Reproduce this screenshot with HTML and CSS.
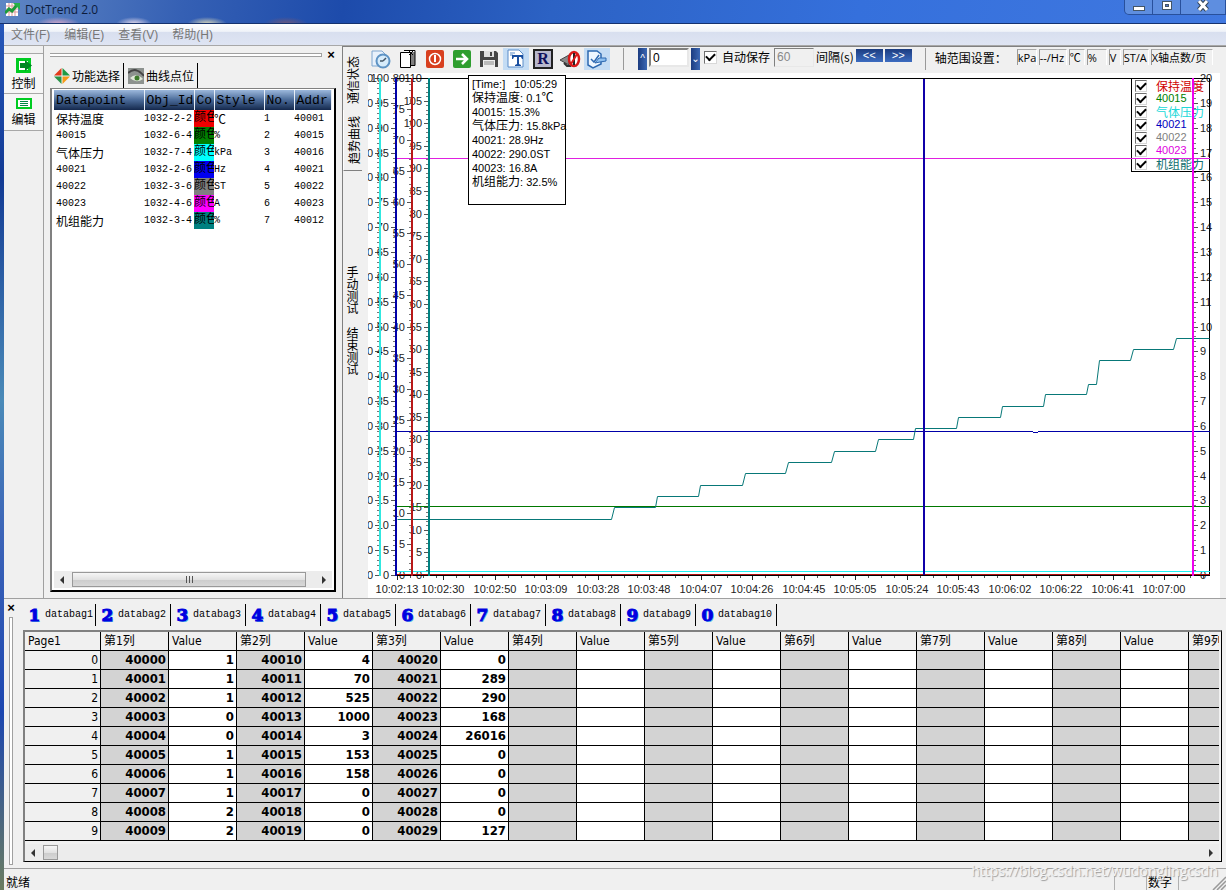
FILE: index.html
```html
<!DOCTYPE html>
<html lang="zh-CN">
<head>
<meta charset="utf-8">
<title>DotTrend 2.0</title>
<link rel="stylesheet" href="styles.css">
</head>
<body>
<header class="titlebar">
  <svg class="app-icon" width="15" height="15" viewBox="0 0 15 15"><rect x="1" y="1" width="12" height="13" fill="#fff"/><path d="M1 4h12M1 7h12M1 10h12M4 1v13M7 1v13M10 1v13" stroke="#d99" fill="none"/><path d="M0 11l4-4 3 2 5-6" stroke="#1c9b3a" stroke-width="3" fill="none"/><path d="M8 1h7v7z" fill="#28b048"/></svg>
  <h1 class="title">DotTrend 2.0</h1>
  <div class="win-buttons">
    <button aria-label="最小化"><svg width="14" height="14"><rect x="1.500" y="6.500" width="11" height="4" fill="#fff" stroke="#456"/></svg></button>
    <button aria-label="最大化"><svg width="14" height="14"><rect x="2.500" y="1.500" width="9" height="8" fill="#fff" stroke="#456"/><rect x="5.500" y="4.500" width="3" height="2" fill="#57c" stroke="#456"/></svg></button>
    <button aria-label="关闭"><svg width="14" height="14"><path d="M3 1l8 9M11 1l-8 9" stroke="#345" stroke-width="5"/><path d="M3 1l8 9M11 1l-8 9" stroke="#fff" stroke-width="3"/></svg></button>
  </div>
</header>

<div class="window">
  <nav class="menu">
    <a href="#">文件(F)</a><a href="#">编辑(E)</a><a href="#">查看(V)</a><a href="#">帮助(H)</a>
  </nav>

  <main class="main">
    <aside class="side">
      <button class="side-btn"><svg width="18" height="18" viewBox="0 0 18 18"><rect x="2.500" y="2.500" width="12" height="12" fill="#fff" stroke="#0c2" stroke-width="3"/><path d="M5 6h5V3l7 5.500-7 5.500v-3H5z" fill="#082"/></svg>控制</button>
      <button class="side-btn"><svg width="18" height="14" viewBox="0 0 18 14"><rect x="2" y="2" width="14" height="9" fill="#fff" stroke="#0c2" stroke-width="2"/><path d="M5 4.500h8M5 6.500h8M5 8.500h8" stroke="#084"/></svg>编辑</button>
    </aside>

    <section class="panel">
      <div class="grip-row"><span class="grip"></span><button class="close" aria-label="关闭面板">×</button></div>
      <div class="ptabs">
        <button class="ptab"><svg width="16" height="16" viewBox="0 0 16 16"><path d="M7.500 0v7.500H0z" fill="#e33c1c"/><path d="M8.500 0v7.500H16z" fill="#1f9a44"/><path d="M0 8.500h7.500V16z" fill="#2a9348"/><path d="M16 8.500H8.500V16z" fill="#f49a1a"/></svg>功能选择</button>
        <button class="ptab"><svg width="16" height="16" viewBox="0 0 16 16"><rect width="16" height="16" fill="#8d928f"/><path d="M0 5q8-7 16 3" stroke="#444" stroke-width="2" fill="none"/><path d="M2 10q6-6 13 1-7 5-13-1" fill="#dfe8d8"/><circle cx="9" cy="10" r="2.500" fill="#3d7a2c"/></svg>曲线点位</button>
      </div>
      <div class="list">
        <table class="points">
          <colgroup><col class="c90"><col class="c50"><col class="c20"><col class="c50"><col class="c30"><col></colgroup>
          <thead><tr><th>Datapoint</th><th>Obj_Id</th><th>Co</th><th>Style</th><th>No.</th><th>Addr</th></tr></thead>
          <tbody>
            <tr><td class="cjk">保持温度</td><td>1032-2-2</td><td class="sw red">颜色</td><td class="cjk">℃</td><td>1</td><td>40001</td></tr>
            <tr><td>40015</td><td>1032-6-4</td><td class="sw green">颜色</td><td>%</td><td>2</td><td>40015</td></tr>
            <tr><td class="cjk">气体压力</td><td>1032-7-4</td><td class="sw cyan">颜色</td><td>kPa</td><td>3</td><td>40016</td></tr>
            <tr><td>40021</td><td>1032-2-6</td><td class="sw blue">颜色</td><td>Hz</td><td>4</td><td>40021</td></tr>
            <tr><td>40022</td><td>1032-3-6</td><td class="sw gray">颜色</td><td>ST</td><td>5</td><td>40022</td></tr>
            <tr><td>40023</td><td>1032-4-6</td><td class="sw magenta">颜色</td><td>A</td><td>6</td><td>40023</td></tr>
            <tr><td class="cjk">机组能力</td><td>1032-3-4</td><td class="sw teal">颜色</td><td>%</td><td>7</td><td>40012</td></tr>
          </tbody>
        </table>
        <div class="scroll"><span class="arrow left"></span><span class="thumb wide"><i></i><i></i><i></i></span><span class="arrow right"></span></div>
      </div>
    </section>

    <section class="trend">
      <nav class="vtabs">
        <button class="vtab turned">通信状态</button>
        <button class="vtab turned active">趋势曲线</button>
        <button class="vtab low">手动测试</button>
        <button class="vtab">结束测试</button>
      </nav>
      <div class="trend-body">
        <div class="toolbar">
          <div class="tools">
            <button aria-label="历史"><svg width="20" height="20" viewBox="0 0 20 20"><path d="M1 2h10l3 3v12H1z" fill="#e8f1fb" stroke="#7fa6cf"/><circle cx="12" cy="12" r="6.500" fill="#d7ecfb" stroke="#5e93c4" stroke-width="2"/><path d="M12 12l3-3M12 12H9" stroke="#456" stroke-width="1.500"/></svg></button>
            <button aria-label="复制"><svg width="20" height="20" viewBox="0 0 20 20"><path d="M6 1.500h11v15H6" fill="#fff" stroke="#000"/><path d="M2.500 3.500h10v15h-10z" fill="#fff" stroke="#000"/><path d="M14 3v14M16 3v13" stroke="#000"/><path d="M11 2l4 4M15 2l-4 4" stroke="#000"/></svg></button>
            <button aria-label="停止"><svg width="20" height="20" viewBox="0 0 20 20"><rect x="1" y="1" width="18" height="18" rx="2" fill="#d8401f"/><circle cx="10" cy="10" r="5.500" fill="none" stroke="#fff" stroke-width="1.500"/><path d="M10 6v7" stroke="#fff" stroke-width="2"/></svg></button>
            <button aria-label="开始"><svg width="20" height="20" viewBox="0 0 20 20"><rect x="1" y="1" width="18" height="18" rx="2" fill="#2f9e2f"/><path d="M4 10h11M10 5l5 5-5 5" stroke="#fff" stroke-width="2.500" fill="none"/></svg></button>
            <button aria-label="保存"><svg width="20" height="20" viewBox="0 0 20 20"><path d="M1 2h16l2 2v14H1z" fill="#444"/><rect x="5" y="2" width="10" height="6" fill="#ddd"/><rect x="11" y="3" width="2" height="4" fill="#444"/><rect x="4" y="11" width="12" height="7" fill="#eee"/><path d="M5 13h10M5 15h10" stroke="#888"/></svg></button>
            <button class="on" aria-label="文本"><svg width="20" height="20" viewBox="0 0 20 20"><path d="M2 1h11l4 4v13H2z" fill="#fff" stroke="#5a8cc8"/><path d="M4 4h5M4 6h3" stroke="#5a8cc8"/><path d="M6 6h11v4h-1l-1-2h-2v7l2 1v1H9v-1l2-1V8H8l-1 2H6z" fill="#1a4fa0"/></svg></button>
            <button aria-label="R"><span class="r-icon">R</span></button>
            <button aria-label="静音"><svg width="22" height="20" viewBox="0 0 22 20"><path d="M1 11l9-5v10z" fill="#888" stroke="#444"/><path d="M5 14l3 3h4" stroke="#333" stroke-width="2" fill="none"/><ellipse cx="15" cy="10" rx="5" ry="7" fill="#fff" stroke="#d81818" stroke-width="2.500"/><path d="M15 4v12" stroke="#222" stroke-width="2"/><path d="M12 15l6-10" stroke="#d81818" stroke-width="2"/></svg></button>
            <button class="on" aria-label="编辑曲线"><svg width="22" height="20" viewBox="0 0 22 20"><path d="M2 2h9l4 3v10l-8 4-5-3z" fill="#eef6ff" stroke="#2d68b0" stroke-width="1.500"/><path d="M5 10l3 3 5-7" stroke="#2d68b0" stroke-width="1.500" fill="none"/><path d="M9 14l4-5 7 0v3l-6 1z" fill="#8ec0f0" stroke="#2d68b0"/></svg></button>
          </div>
          <span class="sep"></span>
          <div class="spin"><button aria-label="增加">^</button><input type="text" value="0" aria-label="数值"><button class="down" aria-label="减少">⌄</button></div>
          <label class="auto"><input type="checkbox" class="check" checked>自动保存</label>
          <label class="interval"><input type="text" value="60" disabled>间隔(s)</label>
          <div class="pager"><button>&lt;&lt;</button><button>&gt;&gt;</button></div>
          <span class="sep"></span>
          <span class="range-label">轴范围设置：</span>
          <div class="ranges"><button class="w20">kPa</button><button class="w28">--/Hz</button><button class="w16">℃</button><button class="w20">%</button><button class="w12">V</button><button class="w26">ST/A</button><button class="w62">X轴点数/页</button></div>
        </div>
        <div class="chart">
          <div class="legend">
            <label class="t-red"><input type="checkbox" class="check" checked>保持温度</label>
            <label class="t-green"><input type="checkbox" class="check" checked>40015</label>
            <label class="t-cyan"><input type="checkbox" class="check" checked>气体压力</label>
            <label class="t-blue"><input type="checkbox" class="check" checked>40021</label>
            <label class="t-gray"><input type="checkbox" class="check" checked>40022</label>
            <label class="t-magenta"><input type="checkbox" class="check" checked>40023</label>
            <label class="t-teal"><input type="checkbox" class="check" checked>机组能力</label>
          </div>
          <svg class="plot" id="plot" viewBox="368 73 852 523" preserveAspectRatio="xMinYMin meet"></svg>
          <div class="tip">
            <p><span>[Time:]</span><span class="time">10:05:29</span></p>
            <p><span class="cjk">保持温度</span>: 0.1<span class="cjk">℃</span></p>
            <p>40015: 15.3%</p>
            <p><span class="cjk">气体压力</span>: 15.8kPa</p>
            <p>40021: 28.9Hz</p>
            <p>40022: 290.0ST</p>
            <p>40023: 16.8A</p>
            <p><span class="cjk">机组能力</span>: 32.5%</p>
          </div>
        </div>
      </div>
    </section>
  </main>

  <section class="bags">
    <div class="bag-side"><button class="close" aria-label="关闭数据">×</button><span class="vgrip"></span></div>
    <div class="bag-body">
      <nav class="bag-tabs" id="bag-tabs"></nav>
      <div class="sheet">
        <div class="sheet-view"><table class="grid" id="grid"></table></div>
        <div class="scroll"><span class="arrow left"></span><span class="thumb"></span><span class="arrow right"></span></div>
      </div>
    </div>
  </section>

  <footer class="status">
    <span class="ready">就绪</span><span class="cell"></span><span class="cell num">数字</span><span class="cell last"></span>
    <svg class="size-grip" width="14" height="14"><path d="M1 14L14 1M5 14l9-9M9 14l5-5" stroke="#999" stroke-width="1.500"/></svg>
  </footer>
  <div class="watermark">https://blog.csdn.net/wudonglingcsdn</div>
</div>
<script src="script.js"></script>
</body>
</html>
```
FILE: styles.css
```css
* { box-sizing: border-box; }
body, h1, p { margin: 0; }
body {
  height: 100vh; overflow: hidden; display: flex; flex-direction: column;
  background: linear-gradient(#2a5cc0, #123a94 20%, #4a8ab8 45%, #3c64b8 60%, #1c46b0 80%, #6a7c60);
  font: 12px/16px "Liberation Sans", "Noto Sans CJK SC", sans-serif; color: #000;
}
button { font: inherit; color: inherit; border: 0; padding: 0; background: none; }
a { color: inherit; text-decoration: none; }

.titlebar {
  flex: none; height: 24px; display: flex; align-items: flex-start; gap: 5px; padding-left: 5px;
  border-bottom: 1px solid #16326e;
  background:
    radial-gradient(ellipse 22px 7px at 58px 24px, #d8a8c8, transparent),
    radial-gradient(ellipse 18px 7px at 134px 24px, #e8dcec, transparent),
    radial-gradient(ellipse 20px 7px at 207px 24px, #dcd8b8, transparent),
    radial-gradient(ellipse 22px 7px at 286px 24px, #705878, transparent),
    linear-gradient(100deg, #5f86c4, #3560b4 15%, #1d4bab 28%, #2c62c4 45%, #3570dc 70%, #4078e0);
}
.app-icon { margin-top: 2px; }
.title { flex: 1; font: 12px/19px "Open Sans", sans-serif; color: #0c1c3c; }
.win-buttons { display: flex; border: 1px solid #28509c; border-top: 0; border-radius: 0 0 0 5px; background: #5e8ee0; }
.win-buttons button { width: 28px; height: 14px; display: flex; justify-content: center; border-right: 1px solid #28509c; }
.win-buttons button:last-child { width: 44px; border: 0; }

.window { flex: 1; min-height: 0; margin-left: 4px; display: flex; flex-direction: column; position: relative; background: #f0f0f0; }
.menu {
  flex: none; height: 22px; display: flex; gap: 14px; padding: 2px 7px 0; color: #777; line-height: 18px;
  background: linear-gradient(#fff, #f0f3f9 35%, #d8dfef 40%, #dfe5f3); border-bottom: 1px solid #a8a8a8;
}
.main { flex: 1; min-height: 0; display: flex; border-bottom: 1px solid #a0a0a0; }

.side { width: 40px; flex: none; padding-top: 7px; border-right: 1px solid #a0a0a0; }
.side-btn {
  width: 100%; height: 40px; display: flex; flex-direction: column; align-items: center; justify-content: center;
  border-top: 1px solid #a8a8a8; font-family: "Noto Sans CJK SC", sans-serif; line-height: 16px; background: #f6f6f6;
}
.side-btn + .side-btn { height: 38px; border-bottom: 1px solid #a8a8a8; }

.panel { width: 299px; flex: none; padding: 4px 6px 6px 6px; display: flex; flex-direction: column; border-right: 1px solid #808080; }
.grip-row { display: flex; align-items: center; gap: 4px; height: 10px; }
.grip { flex: 1; height: 4px; border: 1px solid #a0a0a0; border-left: 0; background: #fff; }
.close { font: bold 13px/10px "Liberation Sans", sans-serif; width: 10px; height: 10px; }
.ptabs { display: flex; height: 28px; padding-top: 2px; align-items: flex-end; }
.ptab {
  height: 25px; display: flex; align-items: center; gap: 2px; padding: 0 3px 0 4px; border-right: 1px solid #000;
  font-family: "Noto Sans CJK SC", sans-serif;
}
.list {
  flex: 1; min-height: 0; display: flex; flex-direction: column; padding: 1px 2px 2px 2px;
  background: #fff; border: 1px solid #808080; border-left: 2px solid #808080; border-right: 2px solid #000; border-bottom: 2px solid #000;
}
.points { width: 100%; table-layout: fixed; border-collapse: collapse; font: 10px/15px "Liberation Mono", "Noto Sans CJK SC", monospace; }
.points col.c90 { width: 90px; } .points col.c50 { width: 50px; } .points col.c20 { width: 20px; }
.points col.c30 { width: 30px; }
.points th, .points td { padding: 0; text-align: left; white-space: nowrap; overflow: hidden; height: 17px; }
.points th {
  height: 20px; padding-left: 2px; border-right: 1px solid #e8eef6; font: 13px/19px "Liberation Mono", monospace;
  background: linear-gradient(#9cb8dc, #4a6a98 50%, #14284c);
}
.points tbody td:first-child { padding-left: 2px; }
.points .cjk, .points .sw { font-size: 12px; }
.cjk { font-family: "Noto Sans CJK SC", sans-serif; font-size: 12px; }
.red { background: #f00000; } .green { background: #008000; } .cyan { background: #00ffff; } .blue { background: #0000f0; }
.gray { background: #808080; } .magenta { background: #ff00ff; } .teal { background: #008080; }

.scroll { height: 17px; flex: none; margin-top: auto; display: flex; align-items: center; gap: 6px; padding: 0 6px; background: #ececec; }
.arrow { border: 4px solid transparent; width: 0; }
.arrow.left { border-right-color: #333; border-left-width: 0; }
.arrow.right { border-left-color: #333; border-right-width: 0; margin-left: auto; }
.thumb { width: 15px; height: 15px; margin-left: 2px; border: 1px solid #999; background: linear-gradient(#f6f6f6, #e2e2e2 50%, #ccc 52%, #d8d8d8); display: flex; justify-content: center; align-items: center; gap: 2px; }
.thumb.wide { width: auto; flex: 1; margin: 0 10px 0 2px; }
.thumb i { width: 1px; height: 7px; background: #555; }

.trend { flex: 1; min-width: 0; display: flex; }
.vtabs { width: 25px; flex: none; padding-top: 2px; border-top: 1px solid #808080; display: flex; flex-direction: column; align-items: flex-start; }
.vtab { writing-mode: vertical-rl; width: 19px; height: 61px; line-height: 19px; text-align: center; font-family: "Noto Sans CJK SC", sans-serif; }
.turned { text-orientation: sideways; transform: rotate(180deg); }
.vtab.active { border-top: 1px solid #808080; border-right: 1px solid #fff; }
.low { margin-top: 88px; }

.trend-body { flex: 1; min-width: 0; display: flex; flex-direction: column; padding-right: 6px; border-top: 1px solid #808080; }
.toolbar { height: 26px; flex: none; display: flex; align-items: flex-start; padding-top: 1px; }
.tools { display: flex; gap: 1px; }
.tools button { width: 26px; height: 22px; display: grid; place-items: center; }
.tools .on { background: #c4dcf4; }
.r-icon { width: 20px; height: 20px; border: 2px solid #222; background: #b8b8cc; color: #10105c; font: bold 16px/16px "Liberation Serif", serif; }
.sep { width: 1px; height: 22px; margin: 0 13px; background: #999; }
.spin { display: flex; gap: 2px; height: 22px; align-items: flex-start; margin-left: 1px; }
.spin button { width: 9px; height: 22px; background: linear-gradient(90deg, #1c3c80, #3c68b4); color: #fff; line-height: 22px; font-size: 10px; }
.spin button.down { font-family: "DejaVu Sans", sans-serif; }
input[type=text] { font: 12px "Liberation Sans", sans-serif; width: 40px; height: 19px; padding: 0 2px; background: #fff; border: 2px solid; border-color: #808080 #e8e8e8 #e8e8e8 #808080; margin: 0; border-radius: 0; }
input[type=text]:disabled { background: #f0f0f0; color: #888; border-width: 1px; }
.auto, .interval { display: flex; align-items: center; height: 18px; font-family: "Noto Sans CJK SC", sans-serif; white-space: nowrap; }
.auto { margin-left: 4px; gap: 5px; }
.interval { margin-left: 4px; gap: 2px; }
.check { appearance: none; width: 13px; height: 13px; margin: 0; display: grid; place-items: center; background: #fff; border: 1px solid; border-color: #707070 #d8d8d8 #d8d8d8 #707070; }
.check:checked::after { content: ""; width: 7px; height: 4px; margin-bottom: 2px; border: solid #000; border-width: 0 0 2px 2px; transform: rotate(-45deg); }
.pager { display: flex; gap: 2px; margin-left: 2px; padding-top: 1px; }
.pager button { width: 27px; height: 13px; color: #fff; background: linear-gradient(#1c3c80, #3c6cc0); font: 11px/12px "Liberation Mono", monospace; }
.range-label { width: 82px; flex: none; margin-left: -4px; line-height: 20px; font-family: "Noto Sans CJK SC", sans-serif; white-space: nowrap; }
.ranges { display: flex; gap: 2px; padding-top: 1px; }
.ranges button { height: 16px; font: 11px/15px "Open Sans", "Noto Sans CJK SC", sans-serif; white-space: nowrap; text-align: left; border-left: 1px solid #999; border-top: 1px solid #aaa; border-right: 1px solid #fff; }
.w20 { width: 20px; } .w28 { width: 28px; } .w16 { width: 16px; } .w12 { width: 12px; } .w26 { width: 26px; } .w62 { width: 62px; }

.chart { flex: 1; min-height: 0; position: relative; background: #fff; }
.plot { position: absolute; left: 0; top: 0; width: 100%; height: 100%; pointer-events: none; font: 11px "Liberation Sans", sans-serif; }
.legend { position: absolute; top: 5px; right: 10px; width: 79px; border: 1px solid #000; padding: 0 0 1px 3px; font-size: 11px; }
.legend label { display: flex; align-items: center; gap: 9px; height: 13px; line-height: 13px; white-space: nowrap; }
.legend .check { width: 12px; height: 12px; }
.legend .t-red, .legend .t-cyan, .legend .t-teal { font: 12px/12px "Noto Sans CJK SC", sans-serif; }
.t-red { color: #d00000; } .t-green { color: #008000; } .t-cyan { color: #20d8d8; } .t-blue { color: #0000c0; }
.t-gray { color: #808080; } .t-magenta { color: #e000e0; } .t-teal { color: #107070; }
.tip { position: absolute; left: 100px; top: 2px; width: 98px; height: 130px; padding: 1px 0 0 3px; background: #fff; border: 1px solid #000; font-size: 11px; line-height: 14px; }
.tip p { height: 14px; white-space: nowrap; }
.tip .cjk { line-height: 12px; }
.time { margin-left: 9px; }

.bags { flex: none; display: flex; padding-right: 4px; }
.bag-side { width: 17px; flex: none; padding: 4px 0 3px 2px; display: flex; flex-direction: column; gap: 4px; }
.vgrip { flex: 1; width: 4px; margin-left: 3px; border: 1px solid #a0a0a0; background: #fff; }
.bag-body { flex: 1; min-width: 0; padding: 5px 0 6px 2px; }
.bag-tabs { display: flex; height: 26px; }
.bag-tabs button { height: 22px; width: 75px; display: flex; align-items: center; gap: 3px; padding-left: 4px; border-right: 1px solid #000; font: 10px/20px "Liberation Mono", monospace; white-space: nowrap; }
.bag-tabs button:first-child { width: 73px; }
.bag-tabs button:last-child { width: 81px; }
.bag-tabs b { width: 15px; font: bold 17px/20px "DejaVu Serif", serif; color: #0000e0; -webkit-text-stroke: 1px #0000e0; text-shadow: 1px 1px #58b8e8; text-align: center; }
.sheet { border: 1px solid #808080; border-left: 2px solid #808080; border-top: 2px solid #808080; border-right: 1px solid #000; border-bottom: 1px solid #000; padding-right: 2px; }
.sheet-view { overflow: hidden; padding-bottom: 3px; }
.grid { table-layout: fixed; width: 1300px; border-collapse: separate; border-spacing: 0; font: 12px/18px "DejaVu Sans Condensed", "Open Sans", "Noto Sans CJK SC", sans-serif; }
.grid th, .grid td { height: 19px; padding: 0 2px; border-right: 1px solid #000; border-bottom: 1px solid #000; overflow: hidden; white-space: nowrap; font-weight: normal; }
.grid th { text-align: left; padding-left: 3px; background: #f0f0f0; }
.grid tbody th { text-align: right; }
.grid td { text-align: right; font-weight: bold; font-size: 13px; background: #fff; }
.grid td.addr { background: #d3d3d3; }
.grid .first { width: 76px; } .grid .col { width: 68px; }

.status { flex: none; height: 22px; display: flex; border-top: 1px solid #a0a0a0; font-family: "Noto Sans CJK SC", sans-serif; line-height: 24px; padding-top: 1px; }
.ready { flex: 1; padding-left: 2px; }
.cell { width: 32px; height: 20px; border-left: 1px solid #b0b0b0; margin-top: 2px; line-height: 20px; }
.cell.last { width: 34px; }
.cell.num { padding-left: 1px; }
.size-grip { margin-top: 6px; }
.watermark { position: absolute; right: 8px; bottom: 9px; font: 14px/20px "Open Sans", sans-serif; color: #f4f4f4; text-shadow: 1px 1px 1px #999; pointer-events: none; }
```
FILE: script.js
```js
const plot = document.getElementById("plot");
const NS = "http://www.w3.org/2000/svg";
const TOP = 78, BOTTOM = 575;

function add(tag, attrs, text) {
  const node = document.createElementNS(NS, tag);
  for (const key in attrs) node.setAttribute(key, attrs[key]);
  if (text !== undefined) node.textContent = text;
  plot.appendChild(node);
}
function line(x1, y1, x2, y2, color, width = 1) {
  add("path", { d: `M${x1} ${y1}L${x2} ${y2}`, stroke: color, "stroke-width": width, fill: "none", "shape-rendering": "crispEdges" });
}

// Value axes: position, colour, number of steps, value per step
const axes = [
  { x: 380, color: "#30e8e0", steps: 20, label: () => "0" },
  { x: 396, color: "#0000a8", steps: 20, label: i => i * 5 },
  { x: 412, color: "#b81818", steps: 16, label: i => i * 5 },
  { x: 429, color: "#008080", steps: 22, label: i => i * 5 },
  { x: 1193, color: "#f000f0", steps: 20, label: i => i, right: true }
];
for (const a of axes) {
  const step = (BOTTOM - TOP) / a.steps;
  const side = a.right ? 1 : -1;
  for (let i = 0; i <= a.steps; i++) {
    const y = Math.round(BOTTOM - i * step);
    line(a.x, y + .5, a.x + side * 5, y + .5, "#555");
    for (let k = 1; k < 5 && i < a.steps; k++) {
      const m = Math.round(BOTTOM - (i + k / 5) * step) + .5;
      line(a.x, m, a.x + side * 3, m, "#777");
    }
    add("text", { x: a.right ? a.x + 7 : a.x - 7, y: y + 4, "text-anchor": a.right ? "start" : "end", fill: "#222" }, a.label(i));
  }
}

// Time axis
const times = ["10:02:13", "10:02:30", "10:02:50", "10:03:09", "10:03:28", "10:03:48", "10:04:07", "10:04:26",
  "10:04:45", "10:05:05", "10:05:24", "10:05:43", "10:06:02", "10:06:22", "10:06:41", "10:07:00"];
times.forEach((t, i) => {
  const x = i ? Math.round(443 + (i - 1) * 51.5) : 397;
  line(x + .5, BOTTOM, x + .5, BOTTOM + 5, "#222");
  for (let k = 1; k < 4; k++) line(x + k * 13 + .5, BOTTOM, x + k * 13 + .5, BOTTOM + 3, "#555");
  add("text", { x, y: 593, "text-anchor": "middle", fill: "#222" }, t);
});

line(396, 78.5, 1210, 78.5, "#000");
line(396, 575.5, 1210, 575.5, "#000");
line(1209.5, 78, 1209.5, 576, "#000");
line(396, 158.5, 1210, 158.5, "#e020e0");
line(396, 506.5, 1210, 506.5, "#007800");
line(396, 571.5, 1210, 571.5, "#20f0f0");
line(396, 574.5, 1210, 574.5, "#b01010");
line(396, 431.5, 1033, 431.5, "#0000a8");
line(1033, 432.5, 1038, 432.5, "#0000a8");
line(1038, 431.5, 1210, 431.5, "#0000a8");

const capacity = [[397, 519], [611, 519], [614, 507], [655, 507], [657, 496], [698, 496], [700, 485], [742, 485],
  [745, 473], [785, 473], [788, 462], [831, 462], [834, 451], [875, 451], [878, 439], [913, 439], [915, 428],
  [956, 428], [958, 417], [1000, 417], [1002, 406], [1043, 406], [1045, 394], [1086, 394], [1088, 384],
  [1096, 384], [1099, 360], [1130, 360], [1133, 349], [1173, 349], [1176, 338], [1209, 338]];
add("polyline", { points: capacity.map(p => `${p[0] + .5},${p[1] + .5}`).join(" "), fill: "none", stroke: "#087878" });

for (const a of axes) line(a.x, TOP, a.x, BOTTOM + 1, a.color, 2);
line(924, 79, 924, 575, "#1000a8", 2);

// Data bag tabs
document.getElementById("bag-tabs").innerHTML = Array.from({ length: 10 }, (_, i) =>
  `<button><b>${(i + 1) % 10}</b>databag${i + 1}</button>`).join("");

// Register sheet
const values = [
  [1, 1, 1, 0, 0, 1, 1, 1, 2, 2],
  [4, 70, 525, 1000, 3, 153, 158, 0, 0, 0],
  [0, 289, 290, 168, 26016, 0, 0, 0, 0, 127]
];
let html = '<thead><tr><th class="first">Page1</th>';
for (let c = 1; c <= 9; c++) html += `<th class="col">第${c}列</th><th class="col">${c < 9 ? "Value" : ""}</th>`;
html += "</tr></thead><tbody>";
for (let r = 0; r < 10; r++) {
  html += `<tr><th>${r}</th>`;
  for (let c = 0; c < 9; c++) {
    const known = c < values.length;
    html += `<td class="addr">${known ? 40000 + c * 10 + r : ""}</td><td>${known ? values[c][r] : ""}</td>`;
  }
  html += "</tr>";
}
document.getElementById("grid").innerHTML = html + "</tbody>";
```
